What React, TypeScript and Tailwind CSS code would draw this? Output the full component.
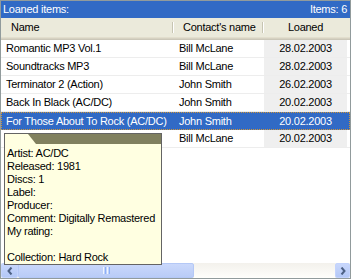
import React from "react";

const rows = [
  { name: "Romantic MP3 Vol.1", contact: "Bill McLane", date: "28.02.2003" },
  { name: "Soundtracks MP3", contact: "Bill McLane", date: "28.02.2003" },
  { name: "Terminator 2 (Action)", contact: "John Smith", date: "26.02.2003" },
  { name: "Back In Black (AC/DC)", contact: "John Smith", date: "20.02.2003" },
  { name: "For Those About To Rock (AC/DC)", contact: "John Smith", date: "20.02.2003", selected: true },
  { name: "", contact: "Bill McLane", date: "20.02.2003" },
];

const tipLines = [
  "Artist: AC/DC",
  "Released: 1981",
  "Discs: 1",
  "Label:",
  "Producer:",
  "Comment: Digitally Remastered",
  "My rating:",
  "\u00a0",
  "Collection: Hard Rock",
];

function Divider() {
  return (
    <div className="absolute right-0 top-[4px] bottom-[4px] flex">
      <div className="w-px bg-[#c7c5b2]" />
      <div className="w-px bg-white" />
    </div>
  );
}

export default function App() {
  return (
    <div
      className="relative w-[351px] h-[279px] bg-white border border-[#919b9c] overflow-hidden flex flex-col text-[11px] tracking-[-0.25px] text-black"
      style={{ fontFamily: '"Liberation Sans", Arial, sans-serif' }}
    >
      {/* title bar */}
      <div className="h-[17px] shrink-0 bg-[#316ac5] text-white flex items-center justify-between pl-[2px] pr-[3px] leading-none">
        <span>Loaned items:</span>
        <span>Items: 6</span>
      </div>
      {/* header */}
      <div className="h-[22px] shrink-0 bg-[#ebeadb] flex flex-col">
        <div className="flex-1 flex leading-none">
          <div className="relative w-[173px] flex items-center pl-[10px]">
            Name
            <Divider />
          </div>
          <div className="relative w-[90px] flex items-center pl-[9px]">
            Contact's name
            <Divider />
          </div>
          <div className="w-[83px] flex items-center justify-center">Loaned</div>
        </div>
        <div className="h-px bg-[#e2decd]" />
        <div className="h-px bg-[#d6d2c2]" />
        <div className="h-px bg-[#cbc7b8]" />
      </div>
      {/* rows */}
      <div className="flex-1 flex flex-col">
        {rows.map((r, i) =>
          r.selected ? (
            <div
              key={i}
              className="h-[18px] shrink-0 flex bg-[#316ac5] text-white border border-dotted border-[#ce953a] leading-none"
            >
              <div className="w-[172px] flex items-center pl-[4px] whitespace-nowrap">{r.name}</div>
              <div className="w-[90px] flex items-center pl-[5px]">{r.contact}</div>
              <div className="w-[83px] flex items-center justify-center">{r.date}</div>
            </div>
          ) : (
            <div key={i} className="h-[18px] shrink-0 flex border-b border-[#ededed] leading-none">
              <div className="w-[173px] flex items-center pl-[5px] whitespace-nowrap">{r.name}</div>
              <div className="w-[90px] flex items-center pl-[5px]">{r.contact}</div>
              <div className="w-[83px] flex items-center justify-center bg-[#efefef]">{r.date}</div>
            </div>
          )
        )}
      </div>
      {/* horizontal scrollbar */}
      <div className="h-[15px] shrink-0 flex bg-[#f4f3ee]">
        <div className="w-[17px] h-full rounded-[2px] border border-[#c3d3fd] bg-gradient-to-b from-[#c8d7fc] to-[#b4c8f6] flex items-center justify-center">
          <svg width="6" height="8" viewBox="0 0 6 8">
            <path d="M4.5 0.5 L1.5 4 L4.5 7.5" stroke="#4d6185" strokeWidth="2" fill="none" />
          </svg>
        </div>
        <div className="w-[176px] h-full rounded-[2px] border border-[#b4c8f6] bg-gradient-to-b from-[#cad8fb] to-[#b9ccf7] flex items-center justify-center">
          <div className="flex gap-px">
            <div className="w-px h-[7px] bg-[#eef4fe]" />
            <div className="w-px h-[7px] bg-[#8cb0f8]" />
            <div className="w-px h-[7px] bg-[#eef4fe]" />
            <div className="w-px h-[7px] bg-[#8cb0f8]" />
          </div>
        </div>
        <div className="flex-1 bg-gradient-to-b from-[#f3f1ec] to-[#fefefb]" />
        <div className="w-[15px] h-full rounded-[2px] border border-[#c3d3fd] bg-gradient-to-b from-[#c8d7fc] to-[#b4c8f6] flex items-center justify-center">
          <svg width="6" height="8" viewBox="0 0 6 8">
            <path d="M1.5 0.5 L4.5 4 L1.5 7.5" stroke="#4d6185" strokeWidth="2" fill="none" />
          </svg>
        </div>
      </div>

      {/* tooltip */}
      <div className="absolute left-[3px] top-[132px] w-[158px] h-[132px] bg-[#ffffe1] border border-[#646464] flex flex-col">
        <svg width="156" height="10" viewBox="0 0 156 10" className="block shrink-0">
          <polygon points="23,0 156,0 156,10 31,10" fill="#80805f" />
        </svg>
        <div className="pl-[2px] pt-[3px] leading-[13px] whitespace-pre">
          {tipLines.map((l, i) => (
            <div key={i} className="h-[13px]">
              {l}
            </div>
          ))}
        </div>
      </div>
    </div>
  );
}
